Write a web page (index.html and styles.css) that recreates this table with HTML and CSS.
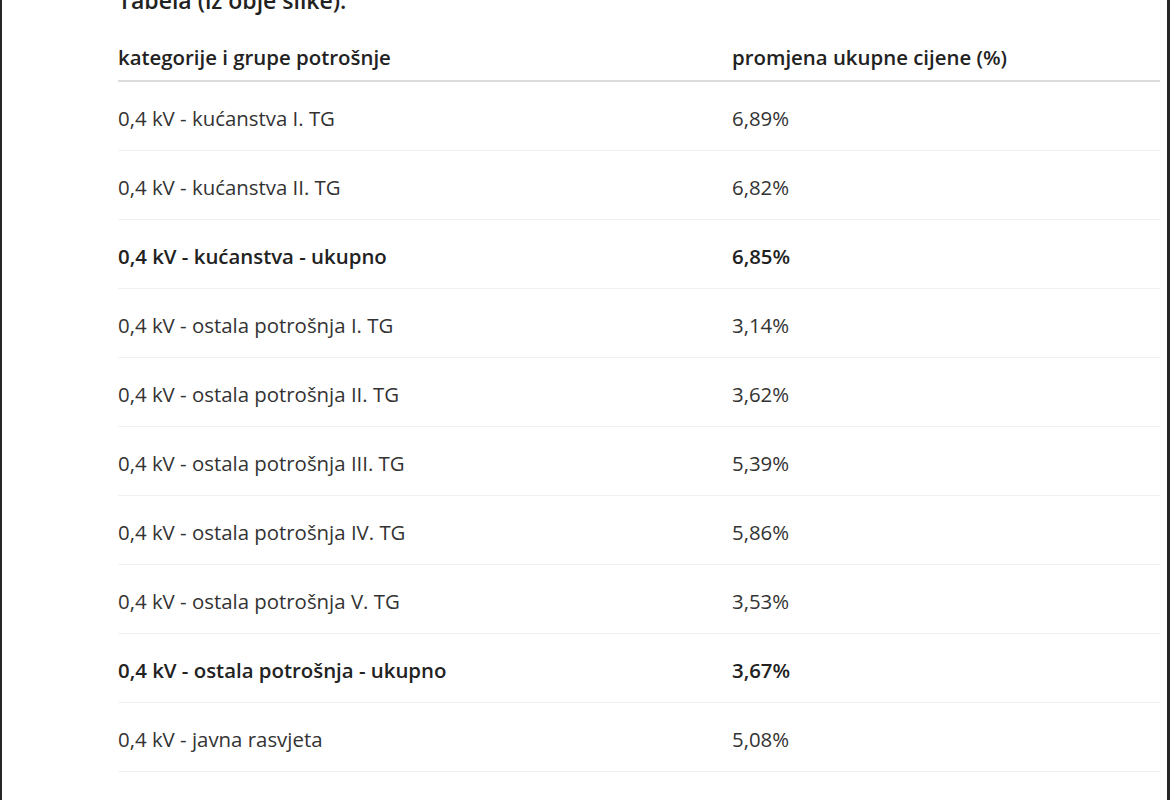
FILE: index.html
```html
<!DOCTYPE html>
<html lang="hr">
<head>
<meta charset="utf-8">
<link rel="stylesheet" href="styles.css">
</head>
<body>
<div class="frame">
  <div class="content">
    <h2 class="title">Tabela (iz obje slike).</h2>
    <table class="tbl">
      <thead>
        <tr><th class="c1">kategorije i grupe potrošnje</th><th class="c2">promjena ukupne cijene (%)</th></tr>
      </thead>
      <tbody>
        <tr><td>0,4 kV - kućanstva I. TG</td><td>6,89%</td></tr>
        <tr><td>0,4 kV - kućanstva II. TG</td><td>6,82%</td></tr>
        <tr class="b"><td>0,4 kV - kućanstva - ukupno</td><td>6,85%</td></tr>
        <tr><td>0,4 kV - ostala potrošnja I. TG</td><td>3,14%</td></tr>
        <tr><td>0,4 kV - ostala potrošnja II. TG</td><td>3,62%</td></tr>
        <tr><td>0,4 kV - ostala potrošnja III. TG</td><td>5,39%</td></tr>
        <tr><td>0,4 kV - ostala potrošnja IV. TG</td><td>5,86%</td></tr>
        <tr><td>0,4 kV - ostala potrošnja V. TG</td><td>3,53%</td></tr>
        <tr class="b"><td>0,4 kV - ostala potrošnja - ukupno</td><td>3,67%</td></tr>
        <tr><td>0,4 kV - javna rasvjeta</td><td>5,08%</td></tr>
        <tr class="b"><td>0,4 kV - ukupno</td><td>5,12%</td></tr>
      </tbody>
    </table>
  </div>
</div>
</body>
</html>
```

FILE: styles.css
```css
html, body {
  margin: 0;
  padding: 0;
  background: #ffffff;
  height: 800px;
  overflow: hidden;
}
.frame {
  box-sizing: border-box;
  width: 1170px;
  height: 800px;
  border-left: 2px solid #262626;
  border-right: 3px solid #262626;
  overflow: hidden;
  background: #fff;
}
.content {
  padding-left: 116px;
  padding-right: 5px;
  font-family: "Open Sans", "Noto Sans", sans-serif;
  color: #333;
}
.title {
  margin: -15px 0 0 0;
  font-size: 23px;
  font-weight: 600;
  line-height: 30px;
  color: #222;
  height: 30px;
}
.tbl {
  width: 1042px;
  border-collapse: collapse;
  margin-top: 28px;
  font-size: 20.4px;
  line-height: 28px;
}
.tbl th {
  text-align: left;
  font-weight: 600;
  color: #222;
  height: 37px;
  padding: 0;
  vertical-align: top;
  border-bottom: 2px solid #dcdcdc;
}
.tbl th.c1 { width: 614px; }
.tbl td {
  padding: 4px 0 0 0;
  height: 64px;
  border-bottom: 1px solid #f0f0f0;
  vertical-align: middle;
}
.tbl tr.b td {
  font-weight: 600;
  color: #222;
}
```
